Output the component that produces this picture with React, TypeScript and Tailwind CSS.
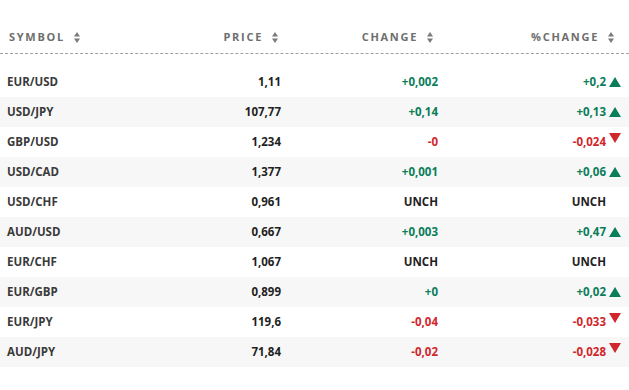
import React from "react";

type Quote = {
  symbol: string;
  price: string;
  change: string;
  pct: string;
  dir: "up" | "down" | "flat";
};

const QUOTES: Quote[] = [
  { symbol: "EUR/USD", price: "1,11", change: "+0,002", pct: "+0,2", dir: "up" },
  { symbol: "USD/JPY", price: "107,77", change: "+0,14", pct: "+0,13", dir: "up" },
  { symbol: "GBP/USD", price: "1,234", change: "-0", pct: "-0,024", dir: "down" },
  { symbol: "USD/CAD", price: "1,377", change: "+0,001", pct: "+0,06", dir: "up" },
  { symbol: "USD/CHF", price: "0,961", change: "UNCH", pct: "UNCH", dir: "flat" },
  { symbol: "AUD/USD", price: "0,667", change: "+0,003", pct: "+0,47", dir: "up" },
  { symbol: "EUR/CHF", price: "1,067", change: "UNCH", pct: "UNCH", dir: "flat" },
  { symbol: "EUR/GBP", price: "0,899", change: "+0", pct: "+0,02", dir: "up" },
  { symbol: "EUR/JPY", price: "119,6", change: "-0,04", pct: "-0,033", dir: "down" },
  { symbol: "AUD/JPY", price: "71,84", change: "-0,02", pct: "-0,028", dir: "down" },
];

const tone = {
  up: "text-[#0b7d5a]",
  down: "text-[#d1262b]",
  flat: "text-[#222]",
};

function SortIcon() {
  return (
    <svg width="6" height="11" viewBox="0 0 6 11" className="shrink-0">
      <path d="M3 0 L6 4.5 L0 4.5 Z" fill="#7a7a7a" />
      <path d="M0 6.5 L6 6.5 L3 11 Z" fill="#7a7a7a" />
    </svg>
  );
}

function Arrow({ dir }: { dir: Quote["dir"] }) {
  if (dir === "up")
    return (
      <svg width="12" height="10" viewBox="0 0 12 10">
        <path d="M6 0 L12 10 L0 10 Z" fill="#0b7d5a" />
      </svg>
    );
  if (dir === "down")
    return (
      <svg width="12" height="10" viewBox="0 0 12 10" className="-translate-y-[4px]">
        <path d="M0 0 L12 0 L6 10 Z" fill="#d1262b" />
      </svg>
    );
  return null;
}

function HeadCell({ label, className }: { label: string; className: string }) {
  return (
    <div className={`flex items-center gap-[9px] ${className}`}>
      <span>{label}</span>
      <SortIcon />
    </div>
  );
}

export default function App() {
  return (
    <div
      className="w-[629px] h-[390px] bg-white overflow-hidden"
      style={{ fontFamily: "'Open Sans', 'Liberation Sans', sans-serif" }}
    >
      <div className="mt-[21px] h-[33px] flex items-center border-b border-dashed border-[#a0a0a0] text-[11px] font-bold tracking-[1.7px] text-[#6e6e6e]">
        <HeadCell label="SYMBOL" className="w-[150px] pl-[9px]" />
        <HeadCell label="PRICE" className="w-[128px] justify-end" />
        <HeadCell label="CHANGE" className="w-[155px] justify-end" />
        <HeadCell label="%CHANGE" className="w-[181px] justify-end" />
      </div>

      <div className="mt-[13px] text-[11.5px] font-bold">
        {QUOTES.map((q, i) => (
          <div
            key={q.symbol}
            className={`h-[30px] flex items-center ${i % 2 === 1 ? "bg-[#f7f7f7]" : "bg-white"}`}
          >
            <div className="w-[150px] pl-[7px] text-[#3a3a3a]">{q.symbol}</div>
            <div className="w-[131px] text-right text-[#1f1f1f]">{q.price}</div>
            <div className={`w-[157px] text-right ${tone[q.dir]}`}>{q.change}</div>
            <div className={`w-[168px] text-right ${tone[q.dir]}`}>{q.pct}</div>
            <div className="w-[23px] pl-[3px] flex items-center">
              <Arrow dir={q.dir} />
            </div>
          </div>
        ))}
      </div>
    </div>
  );
}
